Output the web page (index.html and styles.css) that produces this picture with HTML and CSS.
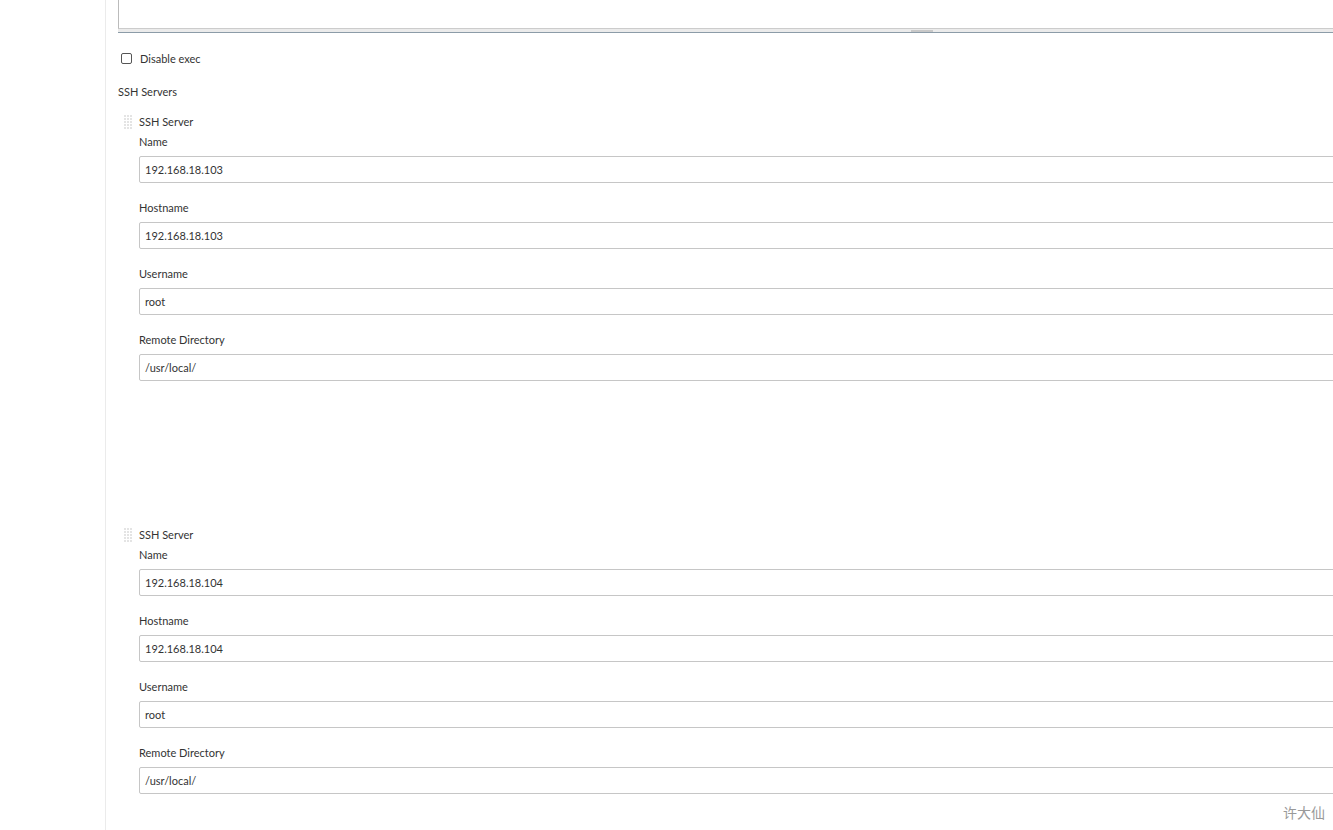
FILE: index.html
```html
<!DOCTYPE html>
<html>
<head>
<meta charset="utf-8">
<link rel="stylesheet" href="styles.css">
</head>
<body>
<div class="page">
  <div class="sidebar"></div>
  <div class="main">
    <div class="textarea">
      <div class="ta-body"></div>
      <div class="ta-resize"><span class="ta-grip"></span></div>
    </div>
    <label class="check-row"><input type="checkbox" class="check"><span>Disable exec</span></label>
    <div class="section-title">SSH Servers</div>

    <div class="server">
      <div class="server-head"><span class="grip"></span><span>SSH Server</span></div>
      <div class="fields">
        <div class="field"><div class="label">Name</div><div class="input">192.168.18.103</div></div>
        <div class="field"><div class="label">Hostname</div><div class="input">192.168.18.103</div></div>
        <div class="field"><div class="label">Username</div><div class="input">root</div></div>
        <div class="field"><div class="label">Remote Directory</div><div class="input">/usr/local/</div></div>
      </div>
    </div>

    <div class="server second">
      <div class="server-head"><span class="grip"></span><span>SSH Server</span></div>
      <div class="fields">
        <div class="field"><div class="label">Name</div><div class="input">192.168.18.104</div></div>
        <div class="field"><div class="label">Hostname</div><div class="input">192.168.18.104</div></div>
        <div class="field"><div class="label">Username</div><div class="input">root</div></div>
        <div class="field"><div class="label">Remote Directory</div><div class="input">/usr/local/</div></div>
      </div>
    </div>
  </div>
</div>
<div class="watermark">许大仙</div>
</body>
</html>
```

FILE: styles.css
```css
html, body {
  margin: 0;
  padding: 0;
  overflow: hidden;
  background: #fff;
}
body {
  font-family: Lato, "Open Sans", sans-serif;
  font-size: 11px;
  color: #333;
  height: 830px;
}
.page {
  display: flex;
  height: 830px;
}
.sidebar {
  width: 105px;
  flex: none;
  border-right: 1px solid #ebebeb;
}
.main {
  flex: none;
  width: 1300px;
  padding-left: 12px;
}
.textarea {
  width: 1300px;
}
.ta-body {
  height: 28px;
  border-left: 1px solid #bbb;
  border-bottom: 1px solid #ccc;
}
.ta-resize {
  height: 3px;
  background: #ebebeb;
  border-bottom: 1px solid #8c9ca8;
  position: relative;
}
.ta-grip {
  position: absolute;
  left: 793px;
  top: 1px;
  width: 22px;
  height: 2px;
  background: #c8c8c8;
}
.check-row {
  display: flex;
  align-items: center;
  height: 16px;
  margin-top: 17px;
  padding-left: 3px;
  gap: 8px;
}
.check {
  appearance: none;
  -webkit-appearance: none;
  margin: 0;
  width: 11px;
  height: 11px;
  border: 1px solid #555;
  border-radius: 2px;
  background: #fff;
}
.section-title {
  height: 16px;
  line-height: 16px;
  margin-top: 18px;
}
.server {
  margin-top: 14px;
}
.server.second {
  margin-top: 146px;
}
.server-head {
  display: flex;
  align-items: center;
  height: 16px;
  line-height: 16px;
  gap: 6px;
  padding-left: 6px;
}
.grip {
  width: 9px;
  height: 15px;
  background-image: linear-gradient(90deg, #e4e4e4 0 2px, transparent 2px 3px);
  background-size: 3px 3px;
  position: relative;
}
.grip::after {
  content: "";
  position: absolute;
  inset: 0;
  background-image: linear-gradient(0deg, #fff 0 1px, transparent 1px 3px);
  background-size: 3px 3px;
}
.fields {
  padding-left: 21px;
  margin-top: 4px;
}
.field {
  margin-bottom: 17px;
}
.label {
  height: 16px;
  line-height: 16px;
  margin-bottom: 6px;
}
.input {
  height: 25px;
  line-height: 25px;
  border: 1px solid #c6c6c6;
  border-radius: 2px;
  padding-left: 5px;
  width: 1300px;
  color: #333;
}
.watermark {
  position: absolute;
  right: 8px;
  bottom: 8px;
  font-family: "Noto Sans CJK SC", sans-serif;
  font-size: 14px;
  color: #999;
}
```
